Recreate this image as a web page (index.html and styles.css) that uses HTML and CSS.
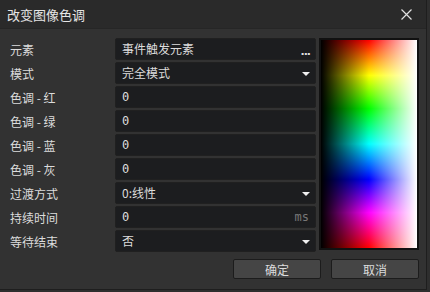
FILE: index.html
```html
<!DOCTYPE html>
<html lang="zh">
<head>
  <meta charset="UTF-8">
  <title>改变图像色调</title>
  <link rel="stylesheet" href="styles.css">
</head>
<body>
  <div class="dialog">
    <div class="titlebar">
      <span class="title">改变图像色调</span>
      <svg class="close" width="11" height="11" viewBox="0 0 11 11">
        <path d="M0.5 0.5 L10.5 10.5 M10.5 0.5 L0.5 10.5" stroke="#e0e0e0" stroke-width="1.2"/>
      </svg>
    </div>

    <div class="content">
      <div class="form">
        <div class="row">
          <span class="label">元素</span>
          <div class="field">事件触发元素<span class="dots">...</span></div>
        </div>
        <div class="row">
          <span class="label">模式</span>
          <div class="field">完全模式<span class="arrow"></span></div>
        </div>
        <div class="row">
          <span class="label">色调 - 红</span>
          <div class="field num">0</div>
        </div>
        <div class="row">
          <span class="label">色调 - 绿</span>
          <div class="field num">0</div>
        </div>
        <div class="row">
          <span class="label">色调 - 蓝</span>
          <div class="field num">0</div>
        </div>
        <div class="row">
          <span class="label">色调 - 灰</span>
          <div class="field num">0</div>
        </div>
        <div class="row">
          <span class="label">过渡方式</span>
          <div class="field">0:线性<span class="arrow"></span></div>
        </div>
        <div class="row">
          <span class="label">持续时间</span>
          <div class="field num">0<span class="unit">ms</span></div>
        </div>
        <div class="row">
          <span class="label">等待结束</span>
          <div class="field">否<span class="arrow"></span></div>
        </div>
      </div>
      <div class="picker"><div class="shade"></div></div>
    </div>

    <div class="buttons">
      <button class="btn">确定</button>
      <button class="btn">取消</button>
    </div>
  </div>
</body>
</html>
```

FILE: styles.css
```css
body {
  margin: 0;
  background: #2e2e2e;
  font-family: "Noto Sans CJK SC", "Noto Sans", sans-serif;
  font-size: 12px;
  color: #dcdcdc;
}

.dialog {
  width: 426px;
  height: 289px;
  background: #323232;
  border-right: 1px solid #1e1e1e;
  border-bottom: 1px solid #1e1e1e;
}

.titlebar {
  height: 28px;
  background: #2a2a2a;
  border-bottom: 1px solid #262626;
  display: flex;
  align-items: center;
  justify-content: space-between;
  padding: 0 14px 0 7px;
}

.title {
  font-size: 13px;
  color: #e6e6e6;
}

.content {
  display: flex;
  padding: 10px 0 0 10px;
  gap: 3px;
}

.form {
  display: flex;
  flex-direction: column;
  gap: 4px;
}

.row {
  display: flex;
  align-items: center;
  height: 20px;
}

.label {
  width: 105px;
}

.field {
  width: 187px;
  height: 20px;
  padding: 0 6px;
  background: #1c1d1f;
  border: 1px solid #202020;
  border-radius: 2px;
  display: flex;
  align-items: center;
  position: relative;
  line-height: 20px;
}

.num {
  font-family: "DejaVu Sans Mono", monospace;
  font-size: 12px;
}

.dots {
  position: absolute;
  right: 5px;
  top: 3px;
  font-family: "DejaVu Sans", sans-serif;
  font-size: 11px;
  font-weight: bold;
  letter-spacing: -1px;
  color: #e0e0e0;
}

.arrow {
  position: absolute;
  right: 5px;
  top: 9px;
  width: 0;
  height: 0;
  border-left: 4px solid transparent;
  border-right: 4px solid transparent;
  border-top: 4px solid #f0f0f0;
}

.unit {
  position: absolute;
  right: 6px;
  color: #777;
  font-size: 12px;
}

.picker {
  width: 96px;
  height: 208px;
  margin-top: -1px;
  border: 2px solid #111;
  background: linear-gradient(to bottom,
    #ff0000 0%, #ffff00 17%, #00ff00 33%, #00ffff 50%,
    #0000ff 67%, #ff00ff 83%, #ff0000 100%);
}

.shade {
  width: 100%;
  height: 100%;
  background: linear-gradient(to right,
    #000 0%, rgba(0, 0, 0, 0) 50%, rgba(255, 255, 255, 0) 50%, #fff 100%);
}

.buttons {
  display: flex;
  justify-content: flex-end;
  gap: 10px;
  padding: 8px 7px 0 0;
}

.btn {
  width: 88px;
  height: 20px;
  background: #454545;
  border: 1px solid #1c1c1c;
  border-radius: 2px;
  color: #dcdcdc;
  font-family: "Noto Sans CJK SC", sans-serif;
  font-size: 12px;
  padding: 0;
}
```
